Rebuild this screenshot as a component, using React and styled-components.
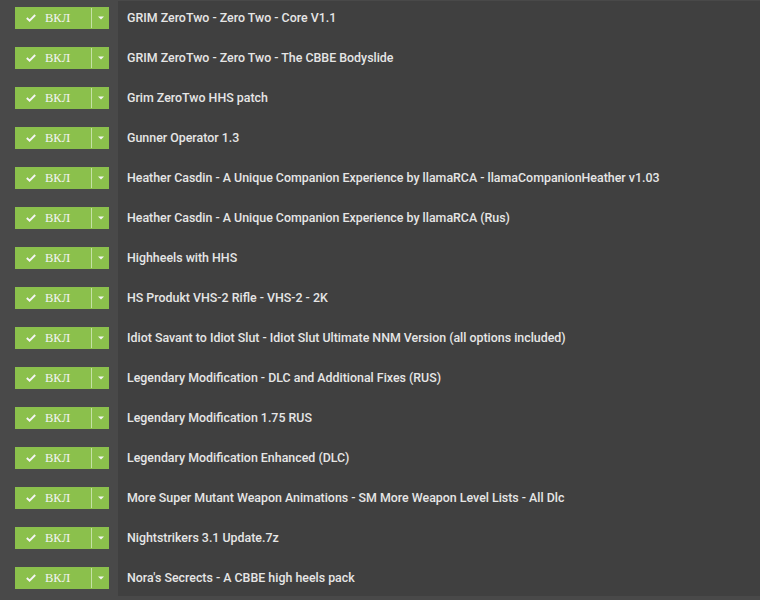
import React from 'react';
import styled, { createGlobalStyle } from 'styled-components';

const GlobalStyle = createGlobalStyle`
body {
  margin: 0;
  background: #494949;
  font-family: Roboto, "Noto Sans", sans-serif;
}
`;

const Page = styled.div`
width: 760px;
height: 595px;
border-top: 1px solid #494949;
overflow: hidden;
background: #494949;
`;

const List = styled.div`
display: flex;
flex-direction: column;
margin-top: -3px;
`;

const Row = styled.div`
display: grid;
grid-template-columns: 118px 1fr;
height: 40px;
`;

const ToggleCell = styled.div`
display: flex;
align-items: center;
padding-left: 15px;
background: #494949;
`;

const Toggle = styled.div`
display: flex;
height: 22px;
background: #8bc04c;
cursor: pointer;
`;

const ToggleMain = styled.div`
display: flex;
align-items: center;
width: 76px;
padding-left: 11px;
box-sizing: border-box;
column-gap: 9px;
color: #f4f4f4;
font-family: "Liberation Serif", "Times New Roman", serif;
font-size: 12.5px;
`;

const Divider = styled.div`
width: 1px;
margin: 1px 0;
background: #c6e1a6;
`;

const ToggleArrow = styled.div`
display: flex;
align-items: center;
justify-content: center;
width: 17px;
`;

const Label = styled.div`
display: flex;
align-items: center;
padding-left: 9px;
padding-bottom: 1px;
background: #404040;
color: #e6e6e6;
font-size: 12.4px;
font-weight: 500;
white-space: nowrap;
`;

const Check = () => (
  <svg width="10" height="8" viewBox="0 0 10 8">
    <path d="M0.8 4 L3.6 6.6 L9.2 1" fill="none" stroke="#f4f4f4" strokeWidth="1.9" />
  </svg>
);

const Caret = () => (
  <svg width="6" height="4" viewBox="0 0 6 4">
    <path d="M0 0.5 H6 L3 3.5 Z" fill="#f4f4f4" />
  </svg>
);

const mods = [
  'GRIM ZeroTwo - Zero Two - Core V1.1',
  'GRIM ZeroTwo - Zero Two - The CBBE Bodyslide',
  'Grim ZeroTwo HHS patch',
  'Gunner Operator 1.3',
  'Heather Casdin - A Unique Companion Experience by llamaRCA - llamaCompanionHeather v1.03',
  'Heather Casdin - A Unique Companion Experience by llamaRCA (Rus)',
  'Highheels with HHS',
  'HS Produkt VHS-2 Rifle - VHS-2 - 2K',
  'Idiot Savant to Idiot Slut - Idiot Slut Ultimate NNM Version (all options included)',
  'Legendary Modification - DLC and Additional Fixes (RUS)',
  'Legendary Modification 1.75 RUS',
  'Legendary Modification Enhanced (DLC)',
  'More Super Mutant Weapon Animations - SM More Weapon Level Lists - All Dlc',
  'Nightstrikers 3.1 Update.7z',
  "Nora's Secrects - A CBBE high heels pack",
];

const App = () => {
  return (
    <>
      <GlobalStyle />
      <Page>
        <List>
          {mods.map((name) => (
            <Row key={name}>
              <ToggleCell>
                <Toggle>
                  <ToggleMain>
                    <Check />
                    <span>ВКЛ</span>
                  </ToggleMain>
                  <Divider />
                  <ToggleArrow>
                    <Caret />
                  </ToggleArrow>
                </Toggle>
              </ToggleCell>
              <Label>{name}</Label>
            </Row>
          ))}
        </List>
      </Page>
    </>
  );
};

export default App;
